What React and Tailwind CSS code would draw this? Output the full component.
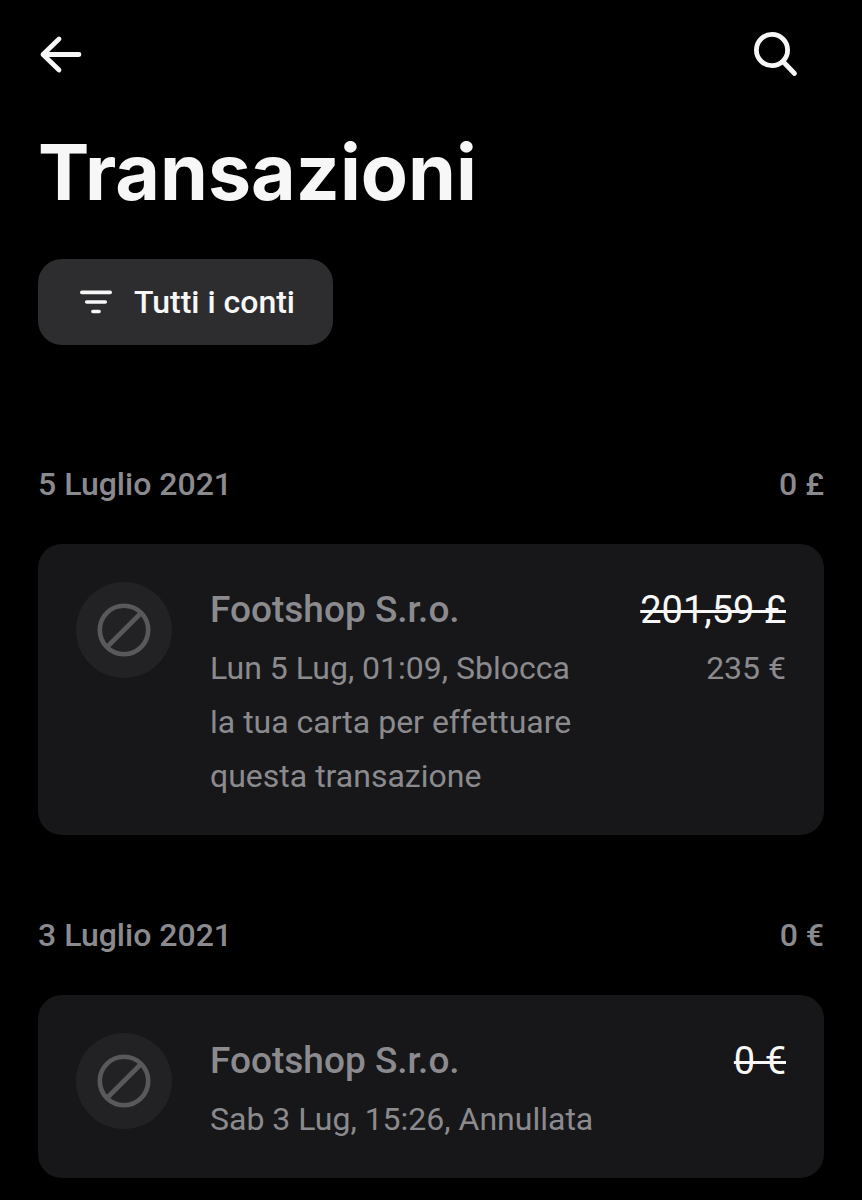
const groups = [
  {
    date: '5 Luglio 2021',
    total: '0 £',
    items: [
      {
        name: 'Footshop S.r.o.',
        note: 'Lun 5 Lug, 01:09, Sblocca la tua carta per effettuare questa transazione',
        amount: '201,59 £',
        converted: '235 €',
      },
    ],
  },
  {
    date: '3 Luglio 2021',
    total: '0 €',
    items: [
      {
        name: 'Footshop S.r.o.',
        note: 'Sab 3 Lug, 15:26, Annullata',
        amount: '0 €',
      },
    ],
  },
];

const BackIcon = () => (
  <svg width="44" height="40" viewBox="0 0 44 40" fill="none" stroke="currentColor" strokeWidth="4.8" strokeLinecap="round" strokeLinejoin="round">
    <path d="M41 20.5H5M21 5L5 20.5L21 36" />
  </svg>
);

const SearchIcon = () => (
  <svg width="48" height="48" viewBox="0 0 48 48" fill="none" stroke="currentColor" strokeWidth="4.8" strokeLinecap="round">
    <circle cx="20" cy="20" r="15.6" />
    <path d="M31.5 32L42.5 43.5" />
  </svg>
);

const FilterIcon = () => (
  <svg width="32" height="24" viewBox="0 0 32 24" fill="none" stroke="currentColor" strokeWidth="3.6" strokeLinecap="round">
    <path d="M1.8 2.4H30.2M6.7 12H25.3M12.9 21.5H19.1" />
  </svg>
);

const BlockedIcon = () => (
  <svg width="54" height="54" viewBox="0 0 54 54" fill="none" stroke="currentColor" strokeWidth="4.6">
    <circle cx="27" cy="27" r="24.2" />
    <path d="M10 44L44 10" />
  </svg>
);

const Transaction = ({ item }) => (
  <li className="flex rounded-3xl bg-[#171719] px-[38px] pt-[38px] pb-8">
    <div className="flex size-24 shrink-0 items-center justify-center rounded-full bg-[#222224] text-[#59595b]">
      <BlockedIcon />
    </div>
    <div className="ml-[38px] min-w-0 flex-1">
      <div className="mb-[3px] flex justify-between leading-[56px]">
        <h3 className="text-[37px] font-medium text-[#8b8b8f]">{item.name}</h3>
        <span className="text-[38px] text-[#f7f7f7] line-through decoration-3">{item.amount}</span>
      </div>
      <div className="flex justify-between gap-8 text-[32px] leading-[54px] text-[#8b8b8f]">
        <p className="max-w-[390px]">{item.note}</p>
        {item.converted && <span className="whitespace-nowrap">{item.converted}</span>}
      </div>
    </div>
  </li>
);

export default function App() {
  return (
    <div className="min-h-screen bg-black px-[38px] font-['Roboto',sans-serif] text-[#f7f7f7]">
      <header className="flex h-[108px] items-center justify-between pr-6">
        <button type="button" aria-label="Indietro">
          <BackIcon />
        </button>
        <button type="button" aria-label="Cerca">
          <SearchIcon />
        </button>
      </header>

      <h1 className="pt-4 font-['Inter',sans-serif] text-[77px] leading-[96px] font-bold">Transazioni</h1>

      <button
        type="button"
        className="mt-[39px] flex h-[86px] items-center gap-[22px] rounded-3xl bg-[#2d2d2f] pr-[38px] pl-[42px] text-[32px] font-medium"
      >
        <FilterIcon />
        Tutti i conti
      </button>

      <main className="mt-[79px] flex flex-col gap-10 pb-[22px]">
        {groups.map((group) => (
          <section key={group.date}>
            <div className="flex h-[120px] items-center justify-between text-[32px] font-medium text-[#8b8b8f]">
              <h2>{group.date}</h2>
              <span>{group.total}</span>
            </div>
            <ul>
              {group.items.map((item) => (
                <Transaction key={item.name} item={item} />
              ))}
            </ul>
          </section>
        ))}
      </main>
    </div>
  );
}
